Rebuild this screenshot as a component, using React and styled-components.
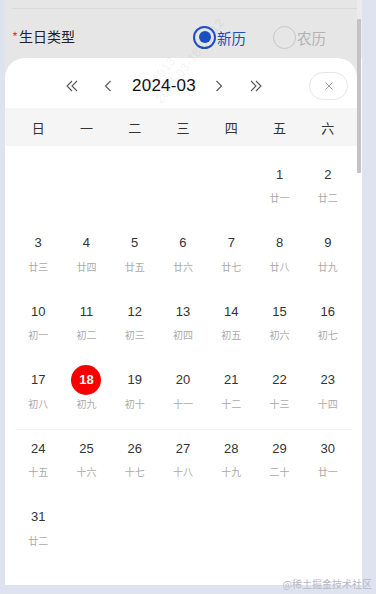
import React from 'react'
import styled, { createGlobalStyle } from 'styled-components'

const GlobalStyle = createGlobalStyle`
  html, body {
    margin: 0;
    padding: 0;
    background: #dfe3f0;
  }
  * { box-sizing: border-box; }
`

const LUNAR = [
  '廿一', '廿二', '廿三', '廿四', '廿五', '廿六', '廿七', '廿八', '廿九',
  '初一', '初二', '初三', '初四', '初五', '初六', '初七', '初八', '初九', '初十',
  '十一', '十二', '十三', '十四', '十五', '十六', '十七', '十八', '十九', '二十',
  '廿一', '廿二',
]
const WEEK = ['日', '一', '二', '三', '四', '五', '六']

const buildWeeks = () => {
  const cells = Array(5).fill(null)
  LUNAR.forEach((l, i) => cells.push({ day: i + 1, lunar: l }))
  while (cells.length % 7) cells.push(null)
  const weeks = []
  for (let i = 0; i < cells.length; i += 7) weeks.push(cells.slice(i, i + 7))
  return weeks
}

const Chevron = ({ dir = 'left', double }) => (
  <svg width={double ? 14 : 8} height="12" viewBox={double ? '0 0 14 12' : '0 0 8 12'} fill="none"
    style={{ transform: dir === 'right' ? 'scaleX(-1)' : 'none' }}>
    <path d={double ? 'M7 1L2 6l5 5M12 1L7 6l5 5' : 'M6.5 1L1.5 6l5 5'} stroke="#555" strokeWidth="1.1" />
  </svg>
)

const App = () => {
  const weeks = buildWeeks()
  return (
    <Page>
      <GlobalStyle />
      <Frame>
        <Main>
          <Divider />
          <FormRow>
            <Label><Star>*</Star>生日类型</Label>
            <RadioGroup>
              <RadioItem $active>
                <RadioCircle $active />新历
              </RadioItem>
              <RadioItem>
                <RadioCircle />农历
              </RadioItem>
            </RadioGroup>
          </FormRow>
          <Sheet>
            <Header>
              <Nav>
                <NavBtn $mr={25}><Chevron double /></NavBtn>
                <NavBtn $mr={20}><Chevron /></NavBtn>
                <Title>2024-03</Title>
                <NavBtn $ml={19} $mr={26}><Chevron dir="right" /></NavBtn>
                <NavBtn><Chevron dir="right" double /></NavBtn>
              </Nav>
              <CloseBtn>
                <svg width="10" height="10" viewBox="0 0 10 10">
                  <path d="M1.5 1.5l7 7M8.5 1.5l-7 7" stroke="#999" strokeWidth="1" />
                </svg>
              </CloseBtn>
            </Header>
            <WeekBar>
              {WEEK.map((w) => <WeekLabel key={w}>{w}</WeekLabel>)}
            </WeekBar>
            <Grid>
              {weeks.map((week, wi) => (
                <WeekRow key={wi} $divider={wi === 4}>
                  {week.map((c, ci) => (
                    <Cell key={ci}>
                      {c && (
                        <>
                          <DayNum $selected={c.day === 18}>{c.day}</DayNum>
                          <Lunar>{c.lunar}</Lunar>
                        </>
                      )}
                    </Cell>
                  ))}
                </WeekRow>
              ))}
            </Grid>
          </Sheet>
        </Main>
        <ScrollTrack>
          <Thumb />
        </ScrollTrack>
        <Watermark>
          <div>920813</div>
          <div>2024-03-18 09:12</div>
        </Watermark>
      </Frame>
      <Credit>@稀土掘金技术社区</Credit>
    </Page>
  )
}

const Page = styled.div`
  position: relative;
  width: 376px;
  height: 594px;
  background: #dfe3f0;
  padding-left: 5px;
  font-family: "Liberation Sans", "Noto Sans CJK SC", sans-serif;
  overflow: hidden;
`

const Frame = styled.div`
  position: relative;
  display: flex;
  width: 357px;
  height: 585px;
  overflow: hidden;
`

const Main = styled.div`
  width: 352px;
  display: flex;
  flex-direction: column;
  background: #e6e6e6;
`

const Divider = styled.div`
  height: 1px;
  margin: 8px 0 0 7px;
  background: #dadada;
`

const FormRow = styled.div`
  height: 49px;
  display: flex;
  align-items: center;
  padding: 4px 31px 0 7px;
`

const Label = styled.div`
  font-size: 14px;
  color: #222;
  font-family: "Noto Sans CJK SC", sans-serif;
`

const Star = styled.span`
  color: #e53935;
  font-size: 13px;
  margin-right: 1px;
`

const RadioGroup = styled.div`
  margin-left: auto;
  display: flex;
  align-items: center;
  gap: 27px;
  padding-top: 3px;
`

const RadioItem = styled.div`
  display: flex;
  align-items: center;
  font-size: 14.5px;
  font-family: "Noto Sans CJK SC", sans-serif;
  color: ${(p) => (p.$active ? '#1d4fc4' : '#b3b3b3')};
`

const RadioCircle = styled.span`
  width: 23px;
  height: 23px;
  border-radius: 50%;
  margin-right: 1px;
  border: ${(p) => (p.$active ? '2px solid #1d4fc4' : '1.5px solid #c6c6c6')};
  display: flex;
  align-items: center;
  justify-content: center;
  &::after {
    content: '';
    display: ${(p) => (p.$active ? 'block' : 'none')};
    width: 12px;
    height: 12px;
    border-radius: 50%;
    background: #1d4fc4;
  }
`

const Sheet = styled.div`
  flex: 1;
  background: #fff;
  border-radius: 20px 20px 0 0;
  display: flex;
  flex-direction: column;
`

const Header = styled.div`
  height: 50px;
  display: flex;
  align-items: center;
  padding: 5px 9px 0 0;
`

const Nav = styled.div`
  flex: 1;
  display: flex;
  align-items: center;
  justify-content: center;
  padding-left: 14px;
`

const NavBtn = styled.span`
  display: flex;
  align-items: center;
  margin-left: ${(p) => p.$ml || 0}px;
  margin-right: ${(p) => p.$mr || 0}px;
`

const Title = styled.span`
  font-size: 17px;
  color: #111;
  letter-spacing: 0.2px;
`

const CloseBtn = styled.span`
  width: 39px;
  height: 28px;
  border: 1px solid #e6e6e6;
  border-radius: 14px;
  display: flex;
  align-items: center;
  justify-content: center;
`

const WeekBar = styled.div`
  height: 38px;
  background: #f5f5f5;
  display: grid;
  grid-template-columns: repeat(7, 1fr);
  align-items: center;
  padding: 0 5px 0 9px;
`

const WeekLabel = styled.span`
  text-align: center;
  font-size: 13px;
  color: #333;
  font-family: "Noto Sans CJK SC", sans-serif;
`

const Grid = styled.div`
  display: flex;
  flex-direction: column;
  padding: 0 5px 0 9px;
`

const WeekRow = styled.div`
  position: relative;
  height: 68.5px;
  display: grid;
  grid-template-columns: repeat(7, 1fr);
  &::before {
    content: '';
    display: ${(p) => (p.$divider ? 'block' : 'none')};
    position: absolute;
    left: 1px;
    right: 0;
    top: 9px;
    height: 1px;
    background: #f3f3f3;
  }
`

const Cell = styled.div`
  display: flex;
  flex-direction: column;
  align-items: center;
  padding-top: 13px;
`

const DayNum = styled.span`
  width: 30px;
  height: 30px;
  border-radius: 50%;
  display: flex;
  align-items: center;
  justify-content: center;
  font-size: 13px;
  color: ${(p) => (p.$selected ? '#fff' : '#333')};
  background: ${(p) => (p.$selected ? '#f70000' : 'transparent')};
  font-weight: ${(p) => (p.$selected ? 700 : 400)};
`

const Lunar = styled.span`
  margin-top: 2px;
  line-height: 14px;
  font-size: 10px;
  color: #aaa;
  font-family: "Noto Sans CJK SC", sans-serif;
`

const ScrollTrack = styled.div`
  width: 5px;
  background: linear-gradient(#ececec 58px, #fff 58px);
  padding-top: 19px;
`

const Thumb = styled.div`
  width: 4px;
  height: 154px;
  background: #c3c3c3;
  border-radius: 1px;
`

const Watermark = styled.div`
  position: absolute;
  left: 135px;
  top: 88px;
  transform: rotate(-52deg);
  transform-origin: left top;
  font-size: 13px;
  font-weight: 700;
  line-height: 15px;
  color: rgba(0, 0, 0, 0.05);
  pointer-events: none;
  white-space: nowrap;
`

const Credit = styled.div`
  position: absolute;
  right: 4px;
  bottom: 3px;
  font-size: 10px;
  color: #b5b9c6;
  font-family: "Noto Sans CJK SC", sans-serif;
`

export default App
